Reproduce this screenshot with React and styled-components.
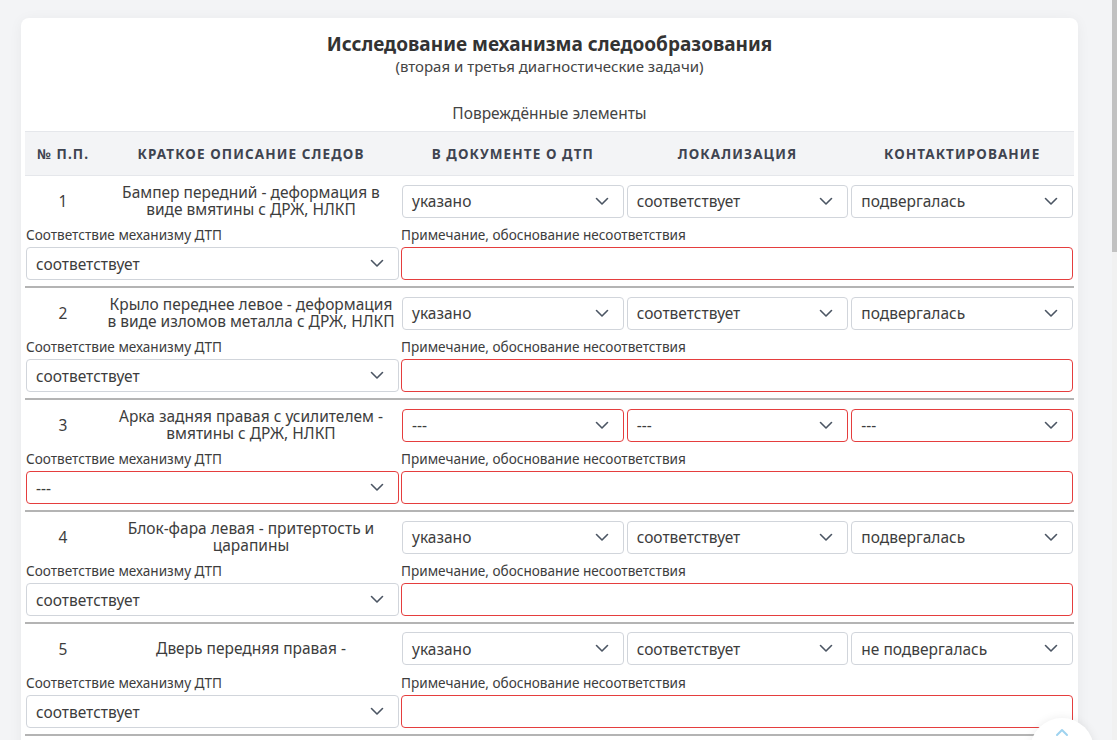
import React from "react";
import styled, { createGlobalStyle } from "styled-components";

const GlobalStyle = createGlobalStyle`
  body {
    margin: 0;
    background: #f3f4f6;
    font-family: "Noto Sans", "Open Sans", sans-serif;
    color: #3d3d3d;
  }
`;

const ok = {
  doc: "указано",
  loc: "соответствует",
  contact: "подвергалась",
  match: "соответствует",
};

const rows = [
  { ...ok, desc: "Бампер передний - деформация в\nвиде вмятины с ДРЖ, НЛКП" },
  { ...ok, desc: "Крыло переднее левое - деформация\nв виде изломов металла с ДРЖ, НЛКП" },
  {
    desc: "Арка задняя правая с усилителем -\nвмятины с ДРЖ, НЛКП",
    doc: "---",
    loc: "---",
    contact: "---",
    match: "---",
  },
  { ...ok, desc: "Блок-фара левая - притертость и\nцарапины" },
  { ...ok, desc: "Дверь передняя правая -", contact: "не подвергалась" },
  { ...ok, desc: "Дверь задняя правая - деформация\nс ДРЖ, НЛКП" },
  { ...ok, desc: "Крыло заднее правое - вмятины\nс ДРЖ, НЛКП" },
  { ...ok, desc: "Фонарь задний правый - разрушение" },
  { ...ok, desc: "Бампер задний - задиры, царапины" },
  { ...ok, desc: "Капот - деформация в передней\nчасти" },
  { ...ok, desc: "Решетка радиатора - разрушение" },
  { ...ok, desc: "Зеркало наружное правое -\nразрушение корпуса" },
  { ...ok, desc: "Подкрылок передний левый -\nразрывы" },
  { ...ok, desc: "Порог правый - вмятины" },
  { ...ok, desc: "Диск колеса переднего левого -\nзадиры" },
  { ...ok, desc: "Противотуманная фара левая -\nразрушение" },
];

const Chevron = () => (
  <svg width="14" height="9" viewBox="0 0 14 9" fill="none">
    <path
      d="M1.5 1.5L7 7l5.5-5.5"
      stroke="#4b5563"
      strokeWidth="1.6"
      strokeLinecap="round"
      strokeLinejoin="round"
    />
  </svg>
);

const Select = ({ value }) => (
  <SelectBox $invalid={value === "---"}>
    <span>{value}</span>
    <Chevron />
  </SelectBox>
);

const App = () => {
  return (
    <>
      <GlobalStyle />
      <Page>
        <Card>
          <Title>Исследование механизма следообразования</Title>
          <Subtitle>(вторая и третья диагностические задачи)</Subtitle>
          <Caption>Повреждённые элементы</Caption>
          <HeadRow>
            <HeadCell>№ П.П.</HeadCell>
            <HeadCell>Краткое описание следов</HeadCell>
            <HeadCell>В документе о ДТП</HeadCell>
            <HeadCell>Локализация</HeadCell>
            <HeadCell>Контактирование</HeadCell>
          </HeadRow>
          {rows.map((row, i) => (
            <Row key={i}>
              <TopLine>
                <Num>{i + 1}</Num>
                <Desc>{row.desc}</Desc>
                <Select value={row.doc} />
                <Select value={row.loc} />
                <Select value={row.contact} />
              </TopLine>
              <BottomLine>
                <Field>
                  <Label>Соответствие механизму ДТП</Label>
                  <Select value={row.match} />
                </Field>
                <Field>
                  <Label>Примечание, обоснование несоответствия</Label>
                  <NoteInput />
                </Field>
              </BottomLine>
            </Row>
          ))}
        </Card>
      </Page>
      <ScrollTrack>
        <ScrollThumb />
      </ScrollTrack>
      <FloatButton>
        <svg width="18" height="18" viewBox="0 0 18 18" fill="none">
          <path
            d="M4 11l5-5 5 5"
            stroke="#9fd3ef"
            strokeWidth="2"
            strokeLinecap="round"
            strokeLinejoin="round"
          />
        </svg>
      </FloatButton>
    </>
  );
};

const Page = styled.div`
  padding: 18px 39px 40px 21px;
`;

const Card = styled.div`
  background: #fff;
  border-radius: 8px;
  padding: 14px 4px 0;
  box-shadow: 0 2px 14px rgba(0, 0, 0, 0.05);
`;

const Title = styled.h1`
  margin: 0;
  text-align: center;
  font-size: 19px;
  line-height: 24px;
  font-weight: 700;
  color: #333;
`;

const Subtitle = styled.div`
  text-align: center;
  font-size: 15px;
  line-height: 18px;
  color: #444;
  margin-top: 1px;
`;

const Caption = styled.div`
  text-align: center;
  font-size: 15.5px;
  line-height: 20px;
  color: #444;
  margin-top: 28px;
  padding-bottom: 8px;
`;

const grid = `
  display: grid;
  grid-template-columns: 74px 296px 1fr 1fr 1fr;
  column-gap: 3px;
`;

const HeadRow = styled.div`
  ${grid}
  height: 43px;
  align-items: center;
  padding: 0 1px;
  background: #f3f4f6;
  border-top: 1px solid #e5e7eb;
  border-bottom: 1px solid #e5e7eb;
`;

const HeadCell = styled.div`
  text-align: center;
  text-transform: uppercase;
  font-size: 13.5px;
  font-weight: 700;
  letter-spacing: 1.1px;
  color: #3f4450;
`;

const Row = styled.div`
  padding: 8px 1px 6px;
  border-bottom: 2px solid #b4b4b4;
`;

const TopLine = styled.div`
  ${grid}
  align-items: center;
  height: 33px;
`;

const Num = styled.div`
  text-align: center;
  font-size: 15.5px;
  color: #3d3d3d;
`;

const Desc = styled.div`
  text-align: center;
  white-space: pre-line;
  font-size: 15.5px;
  line-height: 17px;
  color: #3d3d3d;
`;

const SelectBox = styled.div`
  box-sizing: border-box;
  height: 33px;
  display: flex;
  align-items: center;
  justify-content: space-between;
  padding: 0 14px 0 9px;
  background: #fff;
  border: 1px solid ${(p) => (p.$invalid ? "#e53e3e" : "#d1d5db")};
  border-radius: 4px;
  font-size: 15.5px;
  color: #3d3d3d;
`;

const BottomLine = styled.div`
  display: grid;
  grid-template-columns: 373px 1fr;
  column-gap: 2px;
  margin-top: 9px;
`;

const Field = styled.div`
  display: flex;
  flex-direction: column;
`;

const Label = styled.div`
  font-size: 13.6px;
  line-height: 18px;
  color: #3d3d3d;
  margin-bottom: 3px;
`;

const NoteInput = styled.div`
  box-sizing: border-box;
  height: 33px;
  border: 1px solid #e53e3e;
  border-radius: 4px;
  background: #fff;
`;

const ScrollTrack = styled.div`
  position: fixed;
  top: 0;
  right: 0;
  width: 5px;
  height: 100vh;
  background: #f1f1f1;
`;

const ScrollThumb = styled.div`
  width: 5px;
  height: 252px;
  background: #c1c1c1;
`;

const FloatButton = styled.div`
  position: fixed;
  right: 23px;
  bottom: -42px;
  width: 64px;
  height: 64px;
  border-radius: 50%;
  background: #fff;
  box-shadow: 0 0 10px rgba(0, 0, 0, 0.08);
  display: flex;
  justify-content: center;
  padding-top: 6px;
  box-sizing: border-box;
`;

export default App;
